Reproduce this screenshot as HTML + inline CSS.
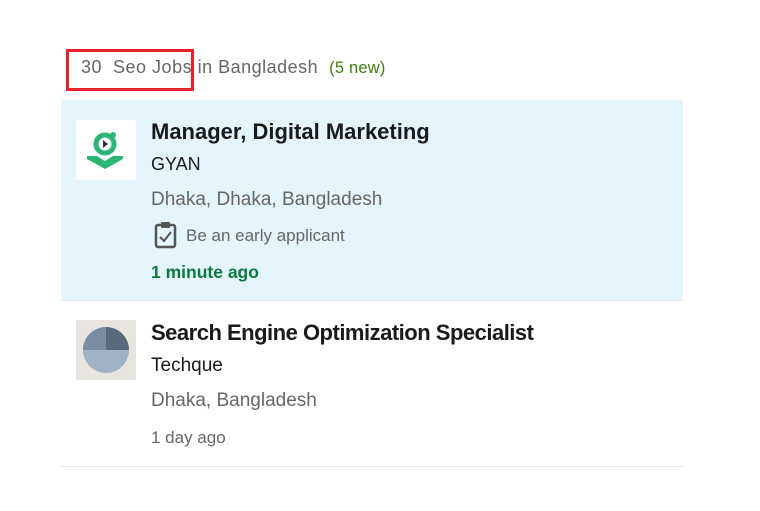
<!DOCTYPE html>
<html><head><style>
body{margin:0;width:760px;height:511px;background:#fff;font-family:"Liberation Sans",sans-serif;position:relative;overflow:hidden}
.a{position:absolute;white-space:nowrap}
</style></head><body>
<div class="a" style="left:81px;top:57px;font-size:18px;color:#666;letter-spacing:0.5px">30&nbsp; Seo Jobs in Bangladesh&nbsp;&nbsp;<span style="color:#3a7d0c;font-size:16.5px;letter-spacing:0.2px">(5 new)</span></div>
<div class="a" style="left:66px;top:49px;width:122px;height:36px;border:3px solid #e8202a"></div>

<div class="a" style="left:61px;top:100px;width:622px;height:200px;background:#e5f5fd;border-bottom:1px solid #e6e6e6"></div>
<div class="a" style="left:76px;top:120px;width:60px;height:60px;background:#fff;border-radius:2px">
<svg width="60" height="60" viewBox="0 0 60 60"><circle cx="29" cy="24" r="9" fill="none" stroke="#2bb673" stroke-width="5"/><circle cx="37" cy="15" r="3" fill="#2bb673"/><path d="M27 20 L32 24 L27 28Z" fill="#333"/><path d="M11 36 L21 36 L29 41 L37 36 L47 36 L47 39 L29 49 L11 39Z" fill="#2bb673"/></svg></div>
<div class="a" style="left:151px;top:119px;font-size:22px;font-weight:bold;color:#1a1a1a;letter-spacing:0px">Manager, Digital Marketing</div>
<div class="a" style="left:151px;top:154px;font-size:18px;color:#1a1a1a">GYAN</div>
<div class="a" style="left:151px;top:189px;font-size:19px;color:#666">Dhaka, Dhaka, Bangladesh</div>
<svg class="a" style="left:154px;top:221px" width="24" height="28" viewBox="0 0 24 28"><rect x="2" y="4" width="19" height="22" rx="2" fill="none" stroke="#555" stroke-width="2.5"/><rect x="7" y="1" width="9" height="6" rx="1" fill="#555"/><path d="M6 16 L10 20 L17 11" fill="none" stroke="#555" stroke-width="2"/></svg>
<div class="a" style="left:186px;top:226px;font-size:17px;color:#666">Be an early applicant</div>
<div class="a" style="left:151px;top:262px;font-size:17.5px;font-weight:bold;color:#0a7a3a">1 minute ago</div>

<div class="a" style="left:76px;top:320px;width:60px;height:60px;background:#e8e4df">
<svg width="60" height="60" viewBox="0 0 60 60"><circle cx="30" cy="30" r="23" fill="#a0b2c6"/><path d="M7 30 A23 23 0 0 1 30 7 L30 30Z" fill="#7a8ea2"/><path d="M30 7 A23 23 0 0 1 53 30 L30 30Z" fill="#5a6a7e"/></svg></div>
<div class="a" style="left:151px;top:320px;font-size:22px;font-weight:bold;color:#1a1a1a;letter-spacing:-0.5px">Search Engine Optimization Specialist</div>
<div class="a" style="left:151px;top:355px;font-size:19px;color:#1a1a1a">Techque</div>
<div class="a" style="left:151px;top:390px;font-size:19px;color:#666">Dhaka, Bangladesh</div>
<div class="a" style="left:151px;top:428px;font-size:17px;color:#666">1 day ago</div>
<div class="a" style="left:61px;top:466px;width:622px;height:1px;background:#e6e6e6"></div>
</body></html>
